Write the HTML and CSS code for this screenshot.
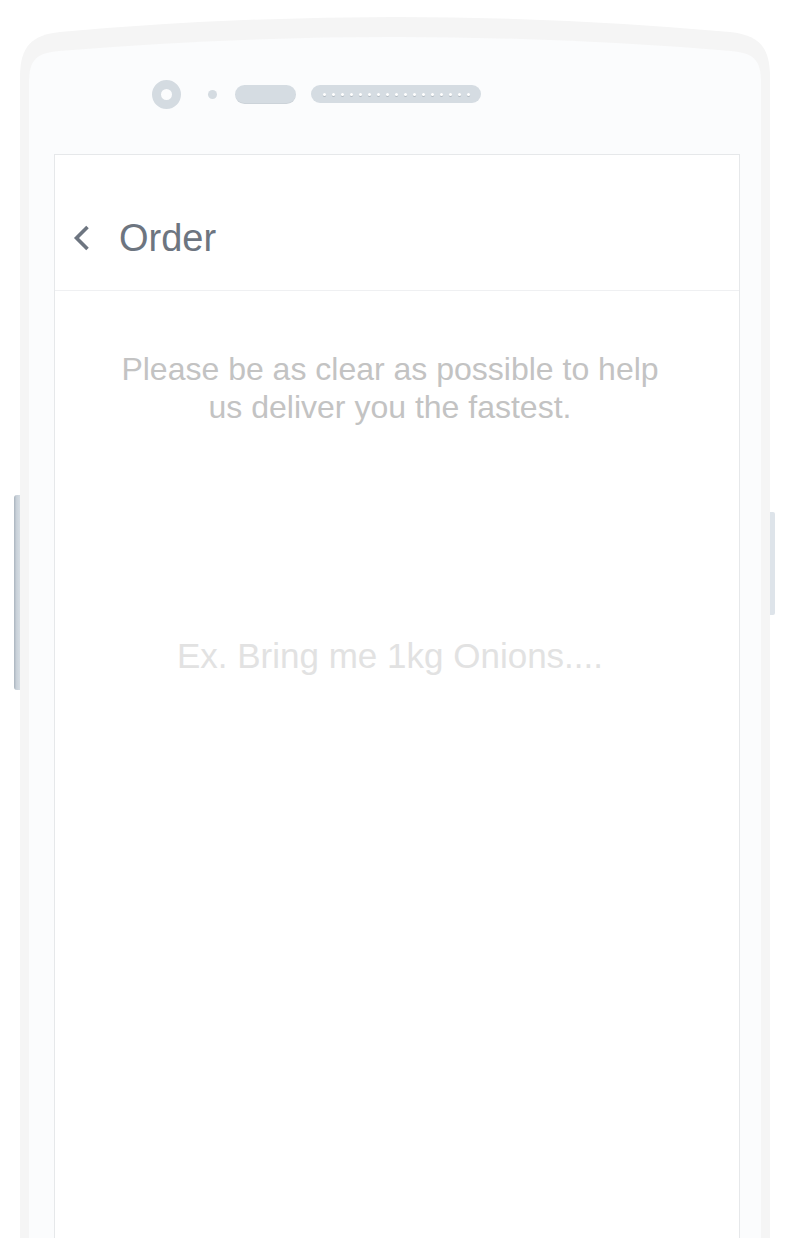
FILE: index.html
```html
<!DOCTYPE html>
<html lang="en">
<head>
<meta charset="utf-8">
<title>Order</title>
<link rel="stylesheet" href="styles.css">
</head>
<body>
<div class="phone">
  <div class="side-btn side-btn-left"></div>
  <div class="side-btn side-btn-right"></div>
  <div class="frame">
    <div class="phone-body">
      <div class="speaker-row">
        <div class="camera"></div>
        <div class="sensor"></div>
        <div class="pill"></div>
        <div class="grille">
          <span></span><span></span><span></span><span></span><span></span><span></span><span></span><span></span><span></span><span></span><span></span><span></span><span></span><span></span><span></span><span></span><span></span>
        </div>
      </div>
      <div class="screen">
        <header class="app-header">
          <svg class="back" width="18" height="28" viewBox="0 0 18 28" aria-hidden="true">
            <polyline points="15.5,3 4.5,14 15.5,25" fill="none" stroke="#6d7580" stroke-width="3.6" stroke-linecap="butt" stroke-linejoin="miter"/>
          </svg>
          <h1 class="title">Order</h1>
        </header>
        <main class="content">
          <p class="hint">Please be as clear as possible to help us deliver you the fastest.</p>
          <p class="placeholder">Ex. Bring me 1kg Onions....</p>
        </main>
      </div>
    </div>
  </div>
</div>
</body>
</html>
```
FILE: styles.css
```css
html, body {
  margin: 0;
  padding: 0;
  height: 1238px;
  overflow: hidden;
  background: #ffffff;
  font-family: "Liberation Sans", Arial, Helvetica, sans-serif;
}

.phone {
  position: relative;
  width: 750px;
  height: 1221px;
  margin: 17px 0 0 20px;
}

.side-btn {
  position: absolute;
}

.side-btn-left {
  left: -6px;
  top: 478px;
  width: 6px;
  height: 195px;
  border-radius: 3px 0 0 3px;
  background: linear-gradient(to right, #aab4be 0%, #c9d1d9 40%, #d6dde3 100%);
}

.side-btn-right {
  right: -5px;
  top: 495px;
  width: 5px;
  height: 103px;
  border-radius: 0 2px 2px 0;
  background: #dee4ea;
}

.frame {
  box-sizing: border-box;
  height: 100%;
  padding: 20px 9px 0 9px;
  background: #f5f5f5;
  clip-path: path("M0,1221 L0,60 C0,29 12,18 40,15 Q375,-15 710,15 C738,18 750,29 750,60 L750,1221 Z");
}

.phone-body {
  box-sizing: border-box;
  height: 100%;
  background: #fbfcfd;
  clip-path: path("M0,1201 L0,46 C0,22 8,16 30,14 Q366,-14 702,14 C724,16 732,22 732,46 L732,1201 Z");
  padding-top: 42px;
  display: flex;
  flex-direction: column;
}

.speaker-row {
  display: flex;
  align-items: center;
  height: 30px;
  padding-left: 123px;
}

.camera {
  box-sizing: border-box;
  width: 29px;
  height: 29px;
  border-radius: 50%;
  border: 9px solid #d4dbe1;
  background: #fbfcfd;
}

.sensor {
  width: 9px;
  height: 9px;
  border-radius: 50%;
  background: #d4dbe1;
  margin-left: 27px;
}

.pill {
  width: 61px;
  height: 19px;
  border-radius: 10px;
  background: #d5dce2;
  box-shadow: inset 0 -1px 0 rgba(0, 0, 0, 0.04);
  margin-left: 18px;
}

.grille {
  box-sizing: border-box;
  width: 170px;
  height: 18px;
  border-radius: 9px;
  background: #d5dce2;
  margin-left: 15px;
  padding-left: 12px;
  display: flex;
  align-items: center;
  gap: 6px;
}

.grille span {
  width: 3px;
  height: 3px;
  border-radius: 50%;
  background: #ffffff;
  box-shadow: 0 1px 0 rgba(120, 130, 140, 0.35);
}

.screen {
  flex: 1;
  margin: 45px 21px 0 25px;
  background: #ffffff;
  border: 1px solid #e6e8ea;
  border-bottom: none;
  display: flex;
  flex-direction: column;
}

.app-header {
  box-sizing: border-box;
  height: 136px;
  padding: 62px 0 0 17px;
  border-bottom: 1px solid #eff0f2;
  display: flex;
  align-items: flex-start;
}

.back {
  display: block;
  margin-top: 7px;
}

.title {
  margin: 0 0 0 29px;
  font-size: 38px;
  font-weight: normal;
  line-height: 42px;
  color: #6d7580;
}

.content {
  padding: 59px 66px 0 52px;
  text-align: center;
}

.hint {
  margin: 0;
  font-size: 32px;
  line-height: 38px;
  color: #c3c3c3;
}

.placeholder {
  margin: 210px 0 0 0;
  font-size: 35px;
  line-height: 40px;
  color: #e2e2e2;
}
```
